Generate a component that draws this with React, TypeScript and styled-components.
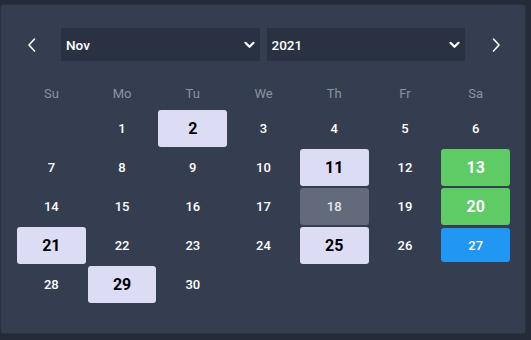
import React from "react";
import styled, { createGlobalStyle } from "styled-components";

const Global = createGlobalStyle`
  html, body { margin: 0; padding: 0; }
  body {
    background: #262b3a;
    font-family: Roboto, "Noto Sans", sans-serif;
    width: 531px;
    height: 340px;
    overflow: hidden;
  }
  #root { padding: 5px 6px 0 1px; }
`;

const Panel = styled.div`
  width: 524px;
  height: 328px;
  box-sizing: border-box;
  background: #353e51;
  border-radius: 3px;
  padding: 23px 15px 0 16px;
  box-shadow: 0 0 0 1px rgba(255, 255, 255, 0.03);
`;

const Header = styled.div`
  display: flex;
  align-items: center;
  height: 33px;
`;

const NavButton = styled.button<{ $side: "prev" | "next" }>`
  width: 29px;
  height: 33px;
  padding: 0;
  border: none;
  background: transparent;
  color: #ffffff;
  display: flex;
  align-items: center;
  justify-content: center;
  cursor: pointer;
  margin-right: ${(p) => (p.$side === "prev" ? "15px" : "0")};
  margin-left: ${(p) => (p.$side === "next" ? "16px" : "0")};
`;

const Selects = styled.div`
  flex: 1;
  display: flex;
  gap: 7px;
`;

const SelectWrap = styled.div`
  position: relative;
  flex: 1;
  height: 33px;
`;

const Select = styled.select`
  appearance: none;
  -webkit-appearance: none;
  width: 100%;
  height: 100%;
  border: none;
  border-radius: 0;
  background: #2a3142;
  color: #ffffff;
  font-family: Roboto, "Noto Sans", sans-serif;
  font-size: 13.5px;
  font-weight: 500;
  padding: 0 0 0 5px;
  outline: none;
`;

const Caret = styled.span`
  position: absolute;
  right: 5px;
  top: 50%;
  transform: translateY(-50%);
  display: flex;
  pointer-events: none;
  color: #ffffff;
`;

const WeekRow = styled.div`
  display: grid;
  grid-template-columns: repeat(7, 1fr);
  column-gap: 2px;
  margin-top: 20px;
  height: 24px;
`;

const WeekDay = styled.div`
  display: flex;
  align-items: center;
  justify-content: center;
  color: #8a92a3;
  font-size: 13px;
  font-weight: 400;
`;

const Days = styled.div`
  display: grid;
  grid-template-columns: repeat(7, 1fr);
  grid-auto-rows: 37px;
  gap: 2px;
  margin-top: 5px;
`;

type Kind = "plain" | "mark" | "green" | "blue" | "gray" | "empty";

const bg: Record<Kind, string> = {
  plain: "transparent",
  empty: "transparent",
  mark: "#dcdcf5",
  green: "#5fcb65",
  blue: "#2196f3",
  gray: "#626a7b",
};

const Day = styled.div<{ $kind: Kind }>`
  display: flex;
  align-items: center;
  justify-content: center;
  border-radius: 3px;
  background: ${(p) => bg[p.$kind]};
  color: ${(p) => (p.$kind === "mark" ? "#000000" : p.$kind === "gray" ? "#e6e8ee" : "#ffffff")};
  font-size: ${(p) => (p.$kind === "mark" || p.$kind === "green" ? "16px" : "13px")};
  font-weight: ${(p) => (p.$kind === "mark" || p.$kind === "green" ? 700 : 500)};
  margin: ${(p) => (p.$kind === "blue" ? "1px 0 2px" : "0")};
`;

const Chevron = ({ dir }: { dir: "left" | "right" }) => (
  <svg width="10" height="16" viewBox="0 0 10 16" fill="none">
    <path
      d={dir === "left" ? "M7.5 2 L2 8 L7.5 14" : "M2.5 2 L8 8 L2.5 14"}
      stroke="currentColor"
      strokeWidth="1.6"
      strokeLinecap="round"
      strokeLinejoin="round"
    />
  </svg>
);

const DownCaret = () => (
  <svg width="11" height="8" viewBox="0 0 11 8" fill="none">
    <path d="M1.5 1.8 L5.5 5.8 L9.5 1.8" stroke="currentColor" strokeWidth="2.2" strokeLinecap="round" strokeLinejoin="round" />
  </svg>
);

const weekDays = ["Su", "Mo", "Tu", "We", "Th", "Fr", "Sa"];

const special: Record<number, Kind> = {
  2: "mark",
  11: "mark",
  13: "green",
  18: "gray",
  20: "green",
  21: "mark",
  25: "mark",
  27: "blue",
  29: "mark",
};

const months = ["Jan", "Feb", "Mar", "Apr", "May", "Jun", "Jul", "Aug", "Sep", "Oct", "Nov", "Dec"];

export default function App() {
  const cells: { n: number | null; kind: Kind }[] = [];
  for (let i = 0; i < 1; i++) cells.push({ n: null, kind: "empty" });
  for (let d = 1; d <= 30; d++) cells.push({ n: d, kind: special[d] ?? "plain" });

  return (
    <>
      <Global />
      <Panel>
        <Header>
          <NavButton $side="prev" aria-label="Previous month">
            <Chevron dir="left" />
          </NavButton>
          <Selects>
            <SelectWrap>
              <Select defaultValue="Nov">
                {months.map((m) => (
                  <option key={m} value={m}>
                    {m}
                  </option>
                ))}
              </Select>
              <Caret>
                <DownCaret />
              </Caret>
            </SelectWrap>
            <SelectWrap>
              <Select defaultValue="2021">
                {[2019, 2020, 2021, 2022, 2023].map((y) => (
                  <option key={y} value={String(y)}>
                    {y}
                  </option>
                ))}
              </Select>
              <Caret>
                <DownCaret />
              </Caret>
            </SelectWrap>
          </Selects>
          <NavButton $side="next" aria-label="Next month">
            <Chevron dir="right" />
          </NavButton>
        </Header>
        <WeekRow>
          {weekDays.map((w) => (
            <WeekDay key={w}>{w}</WeekDay>
          ))}
        </WeekRow>
        <Days>
          {cells.map((c, i) => (
            <Day key={i} $kind={c.kind}>
              {c.n ?? ""}
            </Day>
          ))}
        </Days>
      </Panel>
    </>
  );
}
